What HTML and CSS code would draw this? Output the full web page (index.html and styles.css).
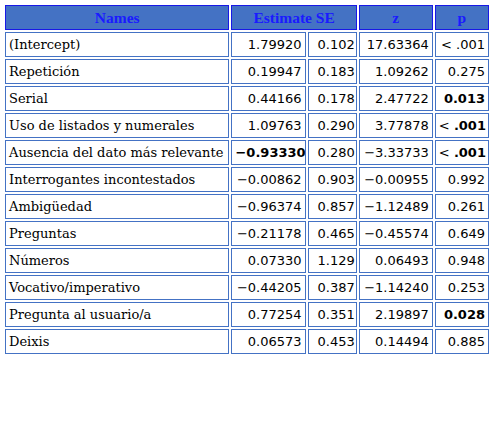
FILE: index.html
```html
<!DOCTYPE html>
<html>
<head>
<meta charset="utf-8">
<link rel="stylesheet" href="styles.css">
</head>
<body>
<table class="tbl">
  <colgroup>
    <col class="c-name"><col class="c-est"><col class="c-se"><col class="c-z"><col class="c-p">
  </colgroup>
  <thead>
    <tr><th>Names</th><th colspan="2">Estimate SE</th><th>z</th><th>p</th></tr>
  </thead>
  <tbody>
    <tr><td class="nm">(Intercept)</td><td>1.79920</td><td class="se">0.102</td><td>17.63364</td><td>&lt; .001</td></tr>
    <tr><td class="nm">Repetición</td><td>0.19947</td><td class="se">0.183</td><td>1.09262</td><td>0.275</td></tr>
    <tr><td class="nm">Serial</td><td>0.44166</td><td class="se">0.178</td><td>2.47722</td><td><b>0.013</b></td></tr>
    <tr><td class="nm">Uso de listados y numerales</td><td>1.09763</td><td class="se">0.290</td><td>3.77878</td><td>&lt; <b>.001</b></td></tr>
    <tr><td class="nm">Ausencia del dato más relevante</td><td><b>−0.93330</b></td><td class="se">0.280</td><td>−3.33733</td><td>&lt; <b>.001</b></td></tr>
    <tr><td class="nm">Interrogantes incontestados</td><td>−0.00862</td><td class="se">0.903</td><td>−0.00955</td><td>0.992</td></tr>
    <tr><td class="nm">Ambigüedad</td><td>−0.96374</td><td class="se">0.857</td><td>−1.12489</td><td>0.261</td></tr>
    <tr><td class="nm">Preguntas</td><td>−0.21178</td><td class="se">0.465</td><td>−0.45574</td><td>0.649</td></tr>
    <tr><td class="nm">Números</td><td>0.07330</td><td class="se">1.129</td><td>0.06493</td><td>0.948</td></tr>
    <tr><td class="nm">Vocativo/imperativo</td><td>−0.44205</td><td class="se">0.387</td><td>−1.14240</td><td>0.253</td></tr>
    <tr><td class="nm">Pregunta al usuario/a</td><td>0.77254</td><td class="se">0.351</td><td>2.19897</td><td><b>0.028</b></td></tr>
    <tr><td class="nm">Deixis</td><td>0.06573</td><td class="se">0.453</td><td>0.14494</td><td>0.885</td></tr>
  </tbody>
</table>
</body>
</html>
```
FILE: styles.css
```css
html, body {
  margin: 0;
  padding: 0;
  background: #ffffff;
}
.tbl {
  margin: 3px;
  border-collapse: separate;
  border-spacing: 2px;
  table-layout: fixed;
  width: 488px;
  font-family: "DejaVu Sans", Verdana, sans-serif;
  font-size: 13px;
  color: #000;
}
.c-name { width: 224px; }
.c-est { width: 74px; }
.c-se { width: 49px; }
.c-z { width: 74px; }
.c-p { width: 54px; }
.tbl th {
  background: #4472c4;
  border: 1px solid #1818e6;
  color: #1a1aff;
  font-family: "Liberation Serif", "Times New Roman", serif;
  font-weight: bold;
  font-size: 15.5px;
  line-height: 23px;
  padding: 0;
  text-align: center;
}
.tbl td {
  border: 1px solid #4472c4;
  line-height: 23px;
  padding: 0 3px 0 3px;
  text-align: right;
  white-space: nowrap;
  overflow: hidden;
}
.tbl td.nm {
  text-align: left;
  font-family: "DejaVu Serif", serif;
  font-size: 13px;
  padding-left: 3px;
}
.tbl td.se {
  padding-right: 1px;
}
.tbl b {
  font-weight: bold;
}
```
